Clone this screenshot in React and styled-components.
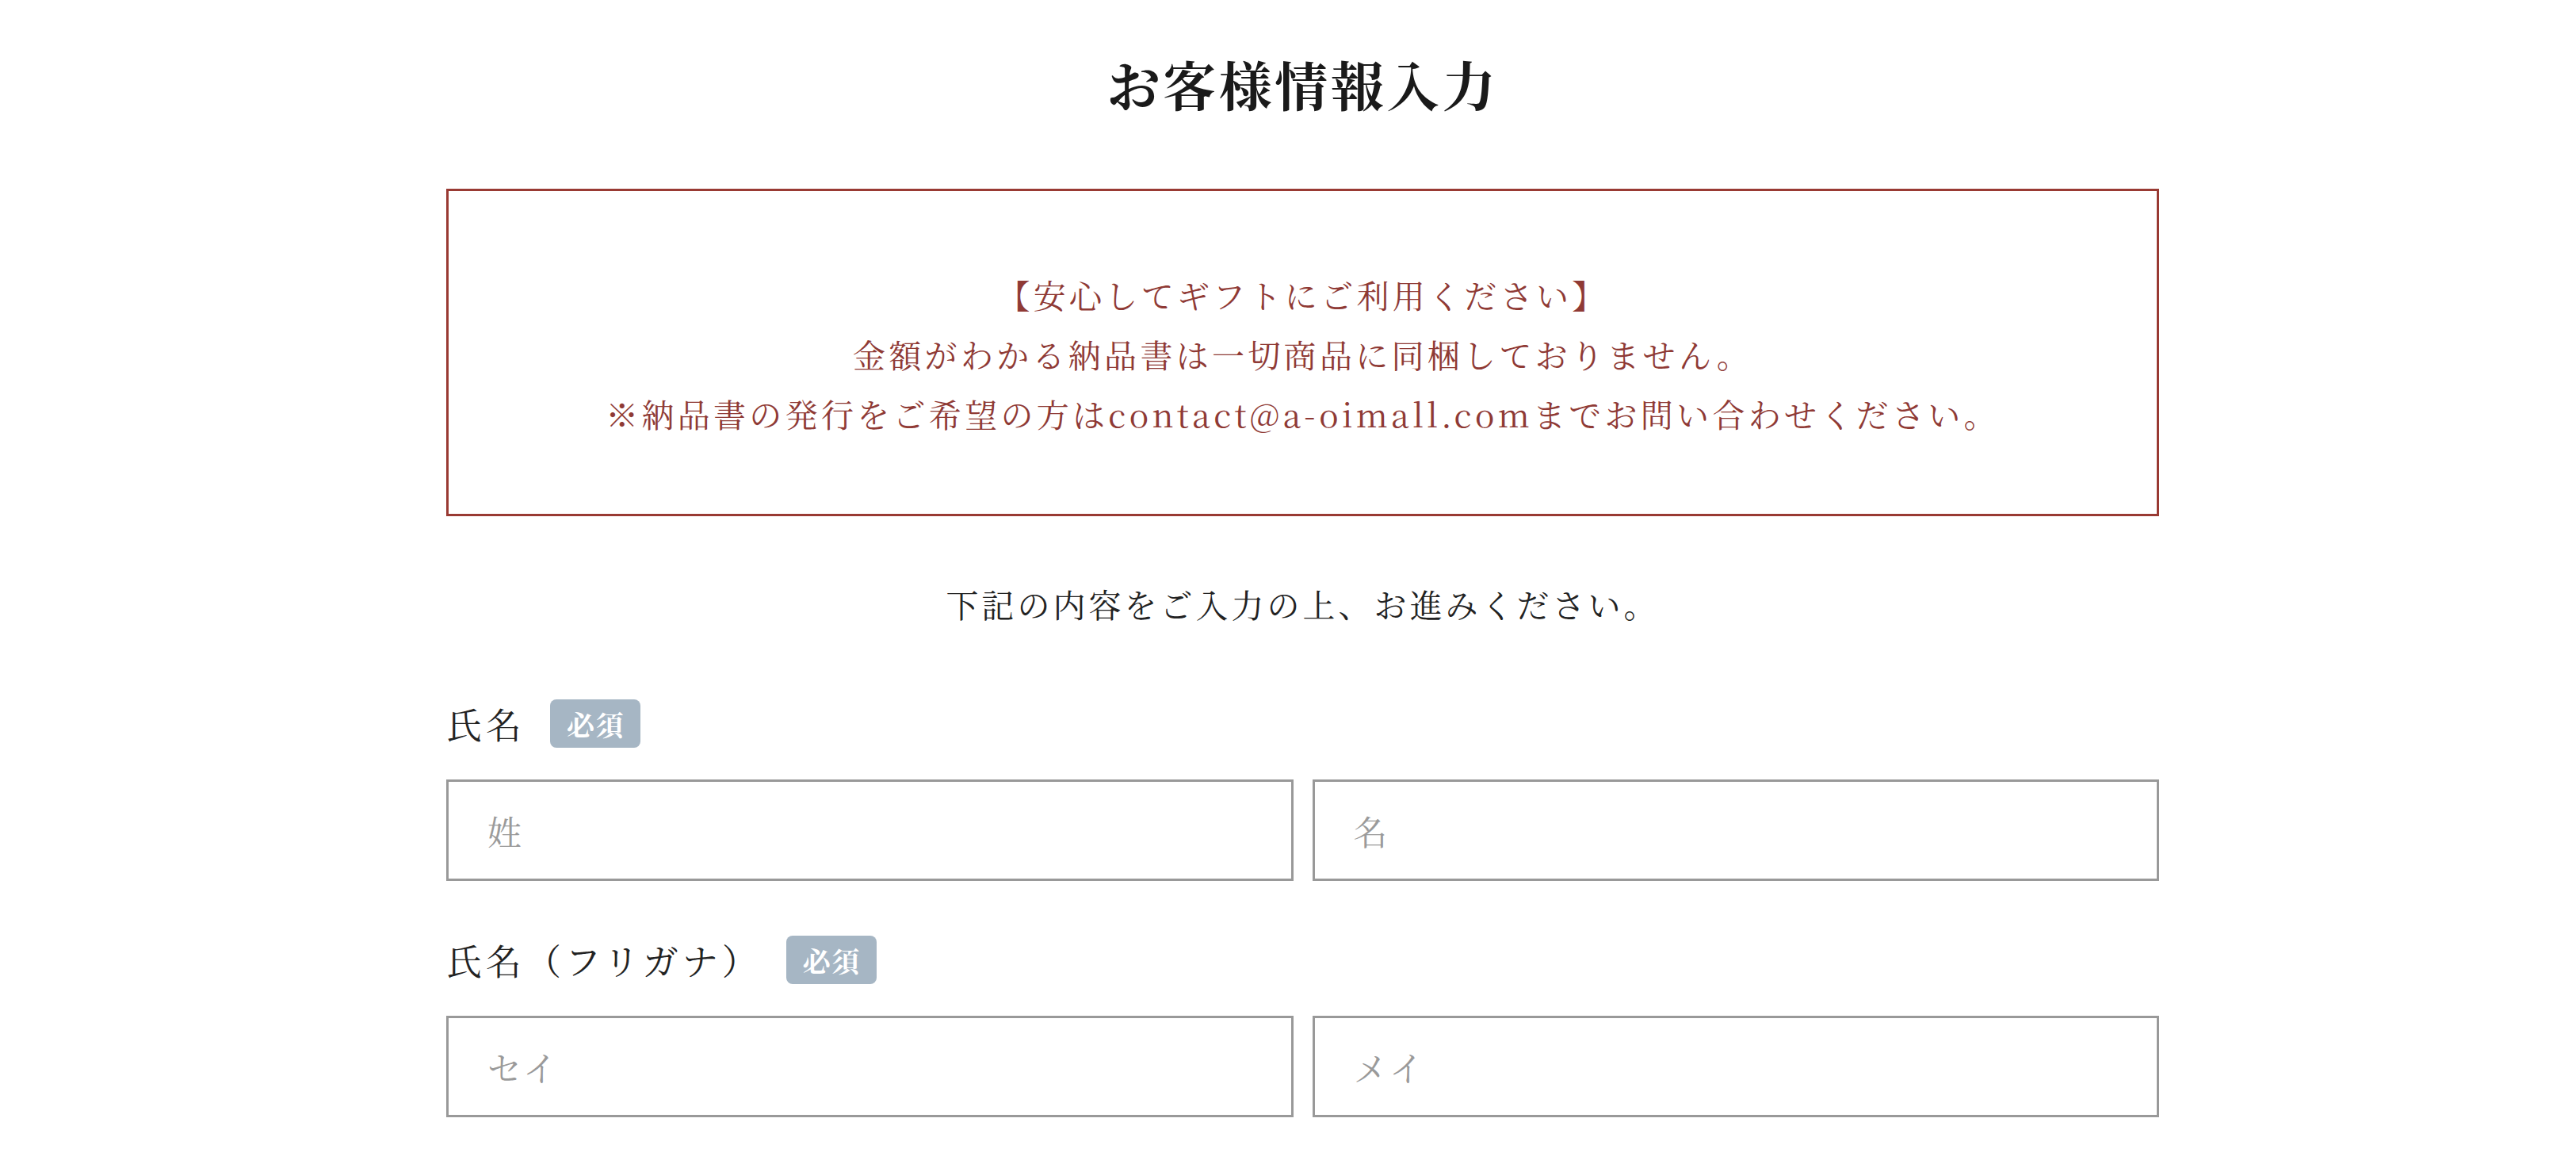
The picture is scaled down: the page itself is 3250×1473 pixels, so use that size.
import React from "react";
import styled, { createGlobalStyle } from "styled-components";

const GlobalStyle = createGlobalStyle`
  html, body {
    margin: 0;
    padding: 0;
    background: #ffffff;
  }
  body {
    font-family: "Noto Serif CJK JP", "Liberation Serif", "Noto Sans CJK JP", serif;
    color: #222222;
  }
  * { box-sizing: border-box; }
`;

const Page = styled.div`
  width: 100%;
  padding: 55px 0 60px 37px;
`;

const Container = styled.main`
  width: 2161px;
  margin: 0 auto;
  display: flex;
  flex-direction: column;
`;

const Title = styled.h1`
  margin: 0;
  font-size: 67px;
  line-height: 100px;
  font-weight: 700;
  letter-spacing: 3.5px;
  text-align: center;
  color: #1a1a1a;
`;

const Notice = styled.section`
  margin-top: 83px;
  border: 3px solid #993a33;
  padding: 93px 40px 89px;
  text-align: center;
  color: #8f3a35;
  font-size: 41px;
  line-height: 75px;
  letter-spacing: 4.3px;
`;

const NoticeLine = styled.p`
  margin: 0;
`;

const Intro = styled.p`
  margin: 73px 0 0;
  text-align: center;
  font-size: 41px;
  line-height: 75px;
  letter-spacing: 4px;
  color: #222222;
`;

const Field = styled.div`
  margin-top: ${(p) => (p.$first ? "83px" : "69px")};
  display: flex;
  flex-direction: column;
  gap: 40px;
`;

const LabelRow = styled.div`
  display: flex;
  align-items: center;
  height: 61px;
`;

const Label = styled.label`
  font-size: 45px;
  letter-spacing: 5px;
  color: #222222;
  margin-right: 31px;
  line-height: 61px;
`;

const Badge = styled.span`
  display: inline-flex;
  align-items: center;
  justify-content: center;
  height: 61px;
  padding: 0 20px 0 21px;
  border-radius: 8px;
  background: #a6b6c4;
  color: #ffffff;
  font-weight: 700;
  font-size: 35px;
  letter-spacing: 1.5px;
`;

const InputGrid = styled.div`
  display: grid;
  grid-template-columns: 1fr 1fr;
  gap: 24px;
`;

const TextInput = styled.input`
  height: 128px;
  width: 100%;
  border: 3px solid #999999;
  border-radius: 0;
  padding: 0 49px;
  font-family: inherit;
  font-size: 43px;
  letter-spacing: 3px;
  color: #222222;
  background: #ffffff;
  outline: none;
  &::placeholder {
    color: #9a9a9a;
  }
`;

const fields = [
  { label: "氏名", placeholders: ["姓", "名"] },
  { label: "氏名（フリガナ）", placeholders: ["セイ", "メイ"] },
];

export default function App() {
  return (
    <>
      <GlobalStyle />
      <Page>
        <Container>
          <Title>お客様情報入力</Title>
          <Notice>
            <NoticeLine>【安心してギフトにご利用ください】</NoticeLine>
            <NoticeLine>金額がわかる納品書は一切商品に同梱しておりません。</NoticeLine>
            <NoticeLine>※納品書の発行をご希望の方はcontact@a-oimall.comまでお問い合わせください。</NoticeLine>
          </Notice>
          <Intro>下記の内容をご入力の上、お進みください。</Intro>
          {fields.map((f, i) => (
            <Field key={f.label} $first={i === 0}>
              <LabelRow>
                <Label>{f.label}</Label>
                <Badge>必須</Badge>
              </LabelRow>
              <InputGrid>
                {f.placeholders.map((ph) => (
                  <TextInput key={ph} type="text" placeholder={ph} />
                ))}
              </InputGrid>
            </Field>
          ))}
        </Container>
      </Page>
    </>
  );
}
